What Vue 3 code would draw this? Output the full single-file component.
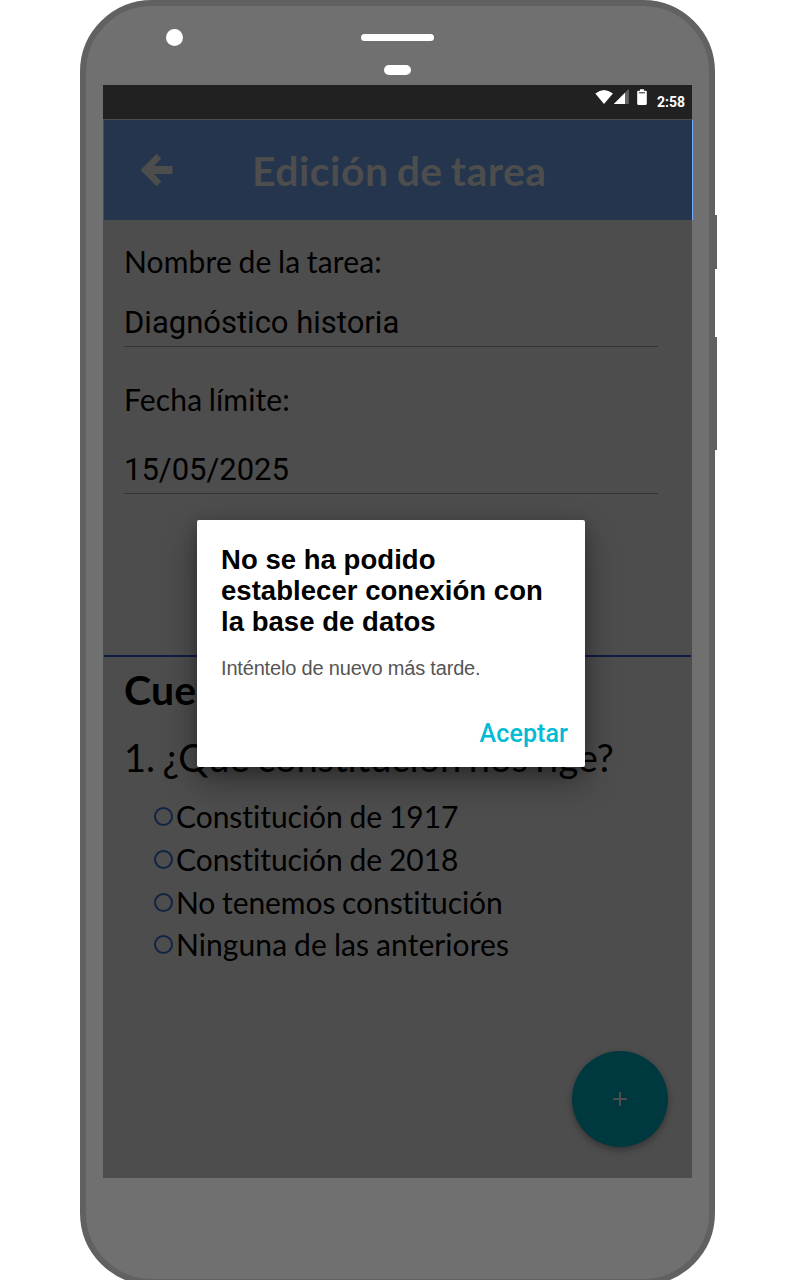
<script setup>
const fields = [
  { label: 'Nombre de la tarea:', value: 'Diagnóstico historia', kind: 'name' },
  { label: 'Fecha límite:', value: '15/05/2025', kind: 'date' },
]
const options = [
  'Constitución de 1917',
  'Constitución de 2018',
  'No tenemos constitución',
  'Ninguna de las anteriores',
]
</script>

<template>
  <div class="stage">
    <div class="phone">
      <i class="camera"></i>
      <i class="speaker"></i>
      <i class="sensor"></i>
      <i class="side-button power"></i>
      <i class="side-button volume"></i>
      <main class="screen">
        <div class="status">
          <svg class="status-icons" width="54" height="18" viewBox="0 0 54 18">
            <path d="M0.3 4.4Q9 -2.6 17.9 4.4L9 15Z" fill="#fff" />
            <path d="M33.8 0V15H18.8Z" fill="#646464" />
            <path d="M30 3.8V15H18.8Z" fill="#fff" />
            <path d="M45 0.2h4v1.5h1.7q1.1 0 1.1 1.1v12q0 1.1-1.1 1.1h-7.4q-1.1 0-1.1-1.1v-12q0-1.1 1.1-1.1h1.7z" fill="#fff" />
            <path d="M44 3.3h6v1h-6z" fill="#212121" />
          </svg>
          <span class="clock">2:58</span>
        </div>
        <header class="bar">
          <svg class="back" width="34" height="34" viewBox="0 0 34 34">
            <path d="M0.5 17L16.6 0.8L21.3 5.5L14 13H32.6V21H14L21.3 28.5L16.6 33.2Z" fill="#4d4d4d" />
          </svg>
          <h1>Edición de tarea</h1>
        </header>
        <section class="form">
          <div v-for="f in fields" :key="f.kind" class="field" :class="f.kind">
            <label>{{ f.label }}</label>
            <div class="input"><span>{{ f.value }}</span></div>
          </div>
        </section>
        <section class="quiz">
          <h2>Cuestionario</h2>
          <p class="question">1. ¿Qué constitución nos rige?</p>
          <ul>
            <li v-for="o in options" :key="o"><i class="radio"></i><span>{{ o }}</span></li>
          </ul>
        </section>
        <button class="fab">
          <svg width="14" height="14" viewBox="0 0 14 14"><path d="M6 0h2v6h6v2H8v6H6V8H0V6h6z" fill="#4d4d4d" /></svg>
        </button>
        <div class="dialog">
          <h3>No se ha podido establecer conexión con la base de datos</h3>
          <p class="message">Inténtelo de nuevo más tarde.</p>
          <div class="actions"><span class="accept">Aceptar</span></div>
        </div>
      </main>
    </div>
  </div>
</template>

<style>
body { margin: 0; background: #fff; }
</style>

<style scoped>
* { box-sizing: border-box; }
h1, h2, h3, p, ul { margin: 0; padding: 0; font-weight: 400; }
.stage { width: 800px; height: 1280px; overflow: hidden; padding-left: 80px; white-space: nowrap; }
.phone {
  position: relative; width: 635px; height: 1285px; padding: 79px 17px 0;
  border: 6px solid #616161; border-radius: 72px; background: #707070;
}
.camera, .speaker, .sensor { position: absolute; background: #fff; border-radius: 9px; }
.camera { left: 80px; top: 23px; width: 17px; height: 17px; }
.speaker { left: 275px; top: 28px; width: 73px; height: 7px; border-radius: 4px; }
.sensor { left: 298px; top: 59px; width: 27px; height: 10px; border-radius: 5px; }
.side-button { position: absolute; left: 629px; width: 2px; background: #616161; }
.power { top: 209px; height: 54px; }
.volume { top: 331px; height: 113px; }
.screen {
  position: relative; width: 589px; height: 1093px; background: #4d4d4d; color: #000;
  font-family: Lato, sans-serif; font-variant-ligatures: none;
}
.status {
  height: 34px; background: #212121; display: flex; justify-content: flex-end;
  align-items: flex-start; padding: 4px 7px 0 0; margin-bottom: 1px;
}
.status-icons { margin-right: 8px; }
.clock { font: 700 14px/26px Roboto, sans-serif; color: #fff; }
.bar {
  display: flex; width: 589px; height: 100px; margin-left: 1px; padding: 33px 0 0 36px;
  background: #24354d; border-right: 1px solid #77aaf8;
}
.back { margin-right: 78px; }
h1 { color: #4d4d4d; font-size: 41px; font-weight: 700; line-height: 35px; letter-spacing: .45px; word-spacing: -2.3px; }
.form { height: 435px; padding: 23px 34px 0 21px; }
label { display: block; font-size: 30px; line-height: 36px; letter-spacing: .15px; word-spacing: -1.3px; }
.name label { margin-bottom: 23px; }
.date label { margin-bottom: 32px; }
.input { height: 45px; border-bottom: 1px solid #333; font: 31px/42px Roboto, sans-serif; }
.field { margin-bottom: 34px; }
.quiz { margin: 0 1px; border-top: 2px solid #0e1d42; padding: 9px 0 0 20px; }
h2 { font-size: 41px; font-weight: 700; line-height: 48px; letter-spacing: .2px; }
.question { font-size: 38px; line-height: 48px; margin-top: 19px; letter-spacing: -.05px; word-spacing: -2px; }
ul { list-style: none; padding-left: 30px; margin-top: 15px; }
li { display: flex; height: 43px; font-size: 30px; line-height: 41px; letter-spacing: -.04px; word-spacing: -.8px; }
li:nth-child(3) { letter-spacing: -.08px; }
li:last-child { margin-top: -1px; letter-spacing: .08px; }
.radio { width: 19px; height: 19px; margin: 11px 3px 0 0; border: 2px solid #102543; border-radius: 50%; flex: none; }
.fab {
  position: absolute; left: 469px; top: 966px; width: 96px; height: 96px; border: 0; border-radius: 50%;
  padding: 0; display: flex; align-items: center; justify-content: center; background: #00383f;
  box-shadow: 0 3px 7px rgba(0,0,0,.35);
}
.dialog {
  position: absolute; left: 94px; top: 435px; width: 388px; height: 247px; padding: 24px 17px 0 24px;
  background: #fff; border-radius: 2px; box-shadow: 0 14px 34px rgba(0,0,0,.36), 0 4px 14px rgba(0,0,0,.2);
  font-family: "Liberation Sans", Arial, sans-serif;
}
h3 { width: 335px; font-size: 27.5px; font-weight: 700; line-height: 31px; letter-spacing: .04px; white-space: normal; }
.message { margin-top: 19px; font-size: 20px; line-height: 24px; letter-spacing: -.18px; color: #555; }
.actions { display: flex; justify-content: flex-end; margin-top: 36px; }
.accept { font: 500 25px/35px Roboto, sans-serif; letter-spacing: .1px; color: #00bcd4; }
</style>
